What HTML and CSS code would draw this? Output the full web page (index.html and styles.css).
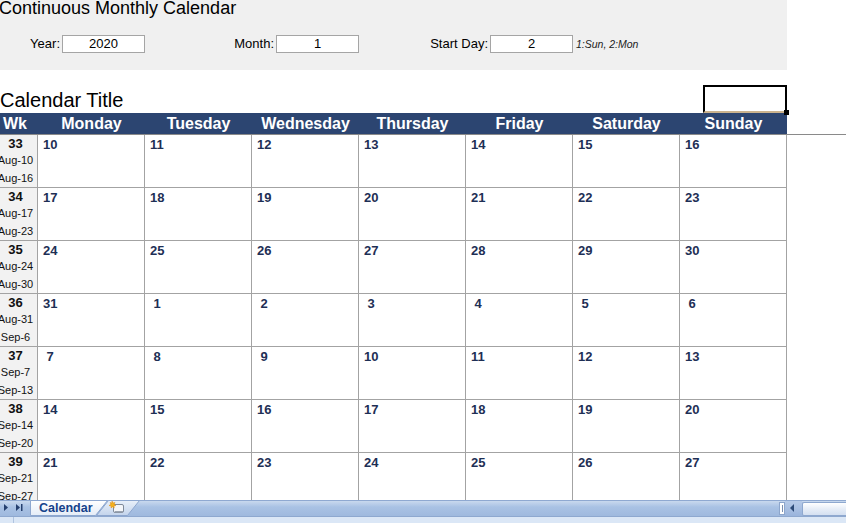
FILE: index.html
```html
<!DOCTYPE html>
<html>
<head>
<meta charset="utf-8">
<title>Continuous Monthly Calendar</title>
<link rel="stylesheet" href="styles.css">
</head>
<body>
<div class="app">
  <main class="sheet">
    <section class="panel">
      <h1 class="panel-title">Continuous Monthly Calendar</h1>
      <div class="params">
        <span class="param-label">Year:</span><div class="param-box">2020</div>
        <span class="param-label">Month:</span><div class="param-box">1</div>
        <span class="param-label">Start Day:</span><div class="param-box">2</div>
        <span class="param-hint">1:Sun, 2:Mon</span>
      </div>
    </section>

    <div class="title-row">
      <h2 class="cal-title">Calendar Title</h2>
      <div class="sel-cell"><span class="sel-handle"></span></div>
    </div>

    <div class="cal-wrap">
      <div class="cal">
        <div class="cal-head">
          <div class="head-wk">Wk</div>
          <div>Monday</div><div>Tuesday</div><div>Wednesday</div><div>Thursday</div><div>Friday</div><div>Saturday</div><div>Sunday</div>
        </div>
        <div class="cal-body">
          <div class="wk"><div class="wk-num">33</div><div class="wk-date">Aug-10</div><div class="wk-date">Aug-16</div></div>
          <div class="day">10</div><div class="day">11</div><div class="day">12</div><div class="day">13</div><div class="day">14</div><div class="day">15</div><div class="day">16</div>

          <div class="wk"><div class="wk-num">34</div><div class="wk-date">Aug-17</div><div class="wk-date">Aug-23</div></div>
          <div class="day">17</div><div class="day">18</div><div class="day">19</div><div class="day">20</div><div class="day">21</div><div class="day">22</div><div class="day">23</div>

          <div class="wk"><div class="wk-num">35</div><div class="wk-date">Aug-24</div><div class="wk-date">Aug-30</div></div>
          <div class="day">24</div><div class="day">25</div><div class="day">26</div><div class="day">27</div><div class="day">28</div><div class="day">29</div><div class="day">30</div>

          <div class="wk"><div class="wk-num">36</div><div class="wk-date">Aug-31</div><div class="wk-date">Sep-6</div></div>
          <div class="day">31</div><div class="day"> 1</div><div class="day"> 2</div><div class="day"> 3</div><div class="day"> 4</div><div class="day"> 5</div><div class="day"> 6</div>

          <div class="wk"><div class="wk-num">37</div><div class="wk-date">Sep-7</div><div class="wk-date">Sep-13</div></div>
          <div class="day"> 7</div><div class="day"> 8</div><div class="day"> 9</div><div class="day">10</div><div class="day">11</div><div class="day">12</div><div class="day">13</div>

          <div class="wk"><div class="wk-num">38</div><div class="wk-date">Sep-14</div><div class="wk-date">Sep-20</div></div>
          <div class="day">14</div><div class="day">15</div><div class="day">16</div><div class="day">17</div><div class="day">18</div><div class="day">19</div><div class="day">20</div>

          <div class="wk"><div class="wk-num">39</div><div class="wk-date">Sep-21</div><div class="wk-date">Sep-27</div></div>
          <div class="day">21</div><div class="day">22</div><div class="day">23</div><div class="day">24</div><div class="day">25</div><div class="day">26</div><div class="day">27</div>
        </div>
      </div>
      <div class="cal-ext"></div>
    </div>
  </main>

  <footer class="tabbar">
    <div class="tab-nav">
      <svg width="30" height="16" viewBox="0 0 30 16">
        <polygon points="4,4 8,7.5 4,11" fill="#243f6e"/>
        <polygon points="16,4 20,7.5 16,11" fill="#243f6e"/>
        <rect x="21" y="4" width="1.5" height="7" fill="#243f6e"/>
      </svg>
    </div>
    <div class="tab tab-active">
      <svg class="tab-shape" width="78" height="16" viewBox="0 0 78 16">
        <defs>
          <linearGradient id="ga" x1="0" y1="0" x2="0" y2="1">
            <stop offset="0" stop-color="#ffffff"/>
            <stop offset="1" stop-color="#e4ecf7"/>
          </linearGradient>
        </defs>
        <polygon points="0.5,0.5 77.5,0.5 65.5,15.5 0.5,15.5" fill="url(#ga)" stroke="#8da7cf"/>
      </svg>
      <span class="tab-label">Calendar</span>
    </div>
    <div class="tab tab-new">
      <svg class="tab-shape" width="44" height="16" viewBox="0 0 44 16">
        <defs>
          <linearGradient id="gn" x1="0" y1="0" x2="0" y2="1">
            <stop offset="0" stop-color="#e9f0f9"/>
            <stop offset="1" stop-color="#c3d4ec"/>
          </linearGradient>
        </defs>
        <polygon points="12.5,0.5 43.5,0.5 31.5,15.5 0.5,15.5" fill="url(#gn)" stroke="#8da7cf"/>
        <rect x="17.5" y="4.5" width="10" height="8" rx="1.5" fill="#f4f6f9" stroke="#7f8a99"/>
        <rect x="19" y="11" width="8" height="1.5" fill="#9aa4b2"/>
        <polygon points="16,1 17,3 19,2.5 18,4.3 20,5.5 17.8,6 18.3,8 16.5,6.8 15,8 15.2,6 13,5.5 15,4.3 14,2.5 16,3" fill="#f4b21c" stroke="#e08a0c" stroke-width="0.5"/>
      </svg>
    </div>
    <div class="tab-fill"></div>
    <div class="split-box"><span class="split-line"></span></div>
    <div class="scroll-btn">
      <svg width="17" height="16" viewBox="0 0 17 16"><polygon points="9,4 5,8 9,12" fill="#2d4b78"/></svg>
    </div>
    <div class="scroll-thumb"></div>
  </footer>
  <div class="status"><span class="status-sep"></span></div>
</div>
</body>
</html>
```

FILE: styles.css
```css
html, body {
  margin: 0;
  padding: 0;
  background: #ffffff;
  overflow: hidden;
}

body {
  font-family: "Liberation Sans", Arial, sans-serif;
  color: #000;
}

.app {
  width: 846px;
  height: 523px;
  display: flex;
  flex-direction: column;
  overflow: hidden;
}

.sheet {
  height: 500px;
  flex: none;
  overflow: hidden;
}

/* ---------- parameter panel ---------- */
.panel {
  width: 787px;
  height: 70px;
  background: #f0f0f0;
  overflow: hidden;
}

.panel-title {
  margin: -1px 0 0 -1px;
  font-size: 18px;
  line-height: 19px;
  font-weight: normal;
  white-space: nowrap;
}

.params {
  margin-top: 17px;
  height: 18px;
  display: grid;
  grid-template-columns: 62px 83px 131px 83px 131px 83px auto;
  align-items: center;
  font-size: 13px;
}

.param-label {
  text-align: right;
  padding-right: 2px;
  line-height: 18px;
  white-space: nowrap;
}

.param-box {
  height: 18px;
  box-sizing: border-box;
  border: 1px solid #a5a5a5;
  background: #fff;
  text-align: center;
  line-height: 16px;
}

.param-hint {
  padding-left: 3px;
  font-size: 10.5px;
  font-style: italic;
  color: #1b1b1b;
  line-height: 18px;
  white-space: nowrap;
}

/* ---------- title row ---------- */
.title-row {
  margin-top: 15px;
  width: 787px;
  height: 28px;
  display: flex;
  justify-content: space-between;
  align-items: flex-start;
}

.cal-title {
  margin: 0;
  padding-top: 2px;
  font-size: 20px;
  line-height: 26px;
  font-weight: normal;
  white-space: nowrap;
}

.sel-cell {
  position: relative;
  width: 84px;
  height: 28px;
  box-sizing: border-box;
  border: 2px solid #000;
  border-bottom: 2px solid #cbb38e;
  background: #fff;
}

.sel-handle {
  position: absolute;
  right: -4px;
  bottom: -4px;
  width: 5px;
  height: 5px;
  background: #000;
  z-index: 2;
}

/* ---------- calendar ---------- */
.cal-wrap {
  display: flex;
  align-items: flex-start;
}

.cal {
  width: 787px;
  flex: none;
}

.cal-ext {
  flex: 1;
  height: 22px;
  box-sizing: border-box;
  border-bottom: 1px solid #8a8a8a;
}

.cal-head {
  display: grid;
  grid-template-columns: 38px repeat(7, 107px);
  height: 21px;
  background: #2c4571;
  color: #ffffff;
  font-size: 16px;
  font-weight: bold;
  line-height: 21px;
  text-align: center;
  white-space: nowrap;
}

.cal-head .head-wk {
  text-align: left;
  padding-left: 3px;
}

.cal-body {
  display: grid;
  grid-template-columns: 38px repeat(7, 107px);
  grid-auto-rows: 53px;
  border-top: 1px solid #8a8a8a;
}

.cal-body > div {
  box-sizing: border-box;
  border-right: 1px solid #a3a3a3;
  border-bottom: 1px solid #a3a3a3;
}

.wk {
  background: #f2f2f2;
  display: flex;
  flex-direction: column;
  align-items: center;
  padding-right: 6px;
  white-space: nowrap;
  color: #111;
}

.wk-num {
  padding-top: 1px;
  font-size: 13px;
  font-weight: bold;
  line-height: 16px;
}

.wk-date {
  font-size: 11px;
  line-height: 17.5px;
}

.day {
  padding: 2px 0 0 5px;
  font-size: 13px;
  font-weight: bold;
  line-height: 15px;
  color: #1e2f55;
  white-space: pre;
}

/* ---------- sheet tab bar ---------- */
.tabbar {
  flex: none;
  display: flex;
  align-items: stretch;
  background: linear-gradient(#c9d9ee, #a9c2e4 40%, #9fb9de);
  border-top: 1px solid #8fa9d1;
  box-sizing: border-box;
  height: 16px;
}

.tab-nav {
  width: 30px;
  flex: none;
  display: flex;
  align-items: center;
}

.tab-nav svg {
  display: block;
  margin-top: -1px;
}

.tab {
  position: relative;
  flex: none;
  height: 16px;
  margin-top: -1px;
}

.tab-shape {
  position: absolute;
  left: 0;
  top: 0;
  display: block;
}

.tab-active {
  width: 78px;
  z-index: 2;
}

.tab-label {
  position: relative;
  display: block;
  padding-left: 9px;
  font-size: 12.5px;
  font-weight: bold;
  line-height: 16px;
  color: #15428b;
  white-space: nowrap;
}

.tab-new {
  width: 44px;
  margin-left: -12px;
  z-index: 1;
}

.tab-fill {
  flex: 1;
}

.split-box {
  width: 6px;
  flex: none;
  margin: 1px 0 1px;
  box-sizing: border-box;
  background: #ffffff;
  border: 1px solid #8da6cc;
  display: flex;
  justify-content: center;
}

.split-line {
  width: 1px;
  margin: 2px 0;
  background: #7a8fb0;
}

.scroll-btn {
  width: 17px;
  flex: none;
  background: linear-gradient(#b7cbe8, #9ab4dc);
}

.scroll-btn svg {
  display: block;
  margin-top: -1px;
}

.scroll-thumb {
  width: 44px;
  flex: none;
  margin: 1px 0 0 0;
  box-sizing: border-box;
  border: 1px solid #8ea8cf;
  border-right: none;
  background: linear-gradient(#ffffff, #e6edf7 50%, #d4e0f1);
  border-radius: 2px 0 0 2px;
}

.status {
  height: 7px;
  flex: none;
  box-sizing: border-box;
  border-top: 1px solid #8ea8cf;
  background: #dbe7f6;
  position: relative;
}

.status-sep {
  display: block;
  margin-left: 13px;
  width: 1px;
  height: 6px;
  background: #b0c4e0;
}
```
